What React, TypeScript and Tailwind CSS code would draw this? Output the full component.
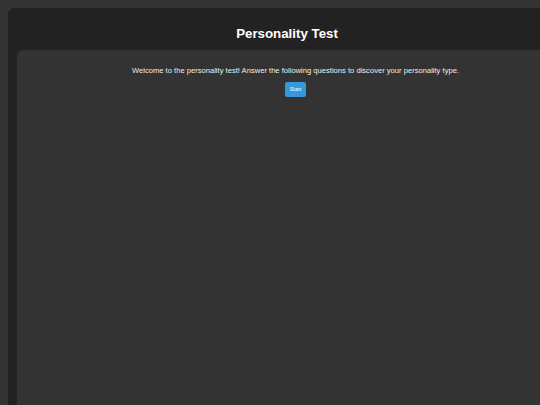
export default function App() {
  return (
    <div className="min-h-screen w-full overflow-hidden bg-[#333] pl-2 pt-2 font-['Liberation_Sans',Arial,sans-serif]">
      <div className="w-[600px] min-h-[400px] rounded-md bg-[#222] pl-[9px]">
        <header className="flex h-[42px] w-[540px] justify-center pt-[16px]">
          <h1 className="text-[13.3px] leading-[20px] font-bold text-white">Personality Test</h1>
        </header>
        <main className="flex min-h-[360px] w-[557px] flex-col items-center rounded-md bg-[#333] pt-[15px]">
          <p className="text-[7.6px] leading-[11px] text-[#eee]">
            Welcome to the personality test! Answer the following questions to discover your personality type.
          </p>
          <button className="mt-[6px] h-[15px] w-[21px] rounded-[2px] bg-[#3498db] text-[5.5px] text-white">
            Start
          </button>
        </main>
      </div>
    </div>
  );
}
